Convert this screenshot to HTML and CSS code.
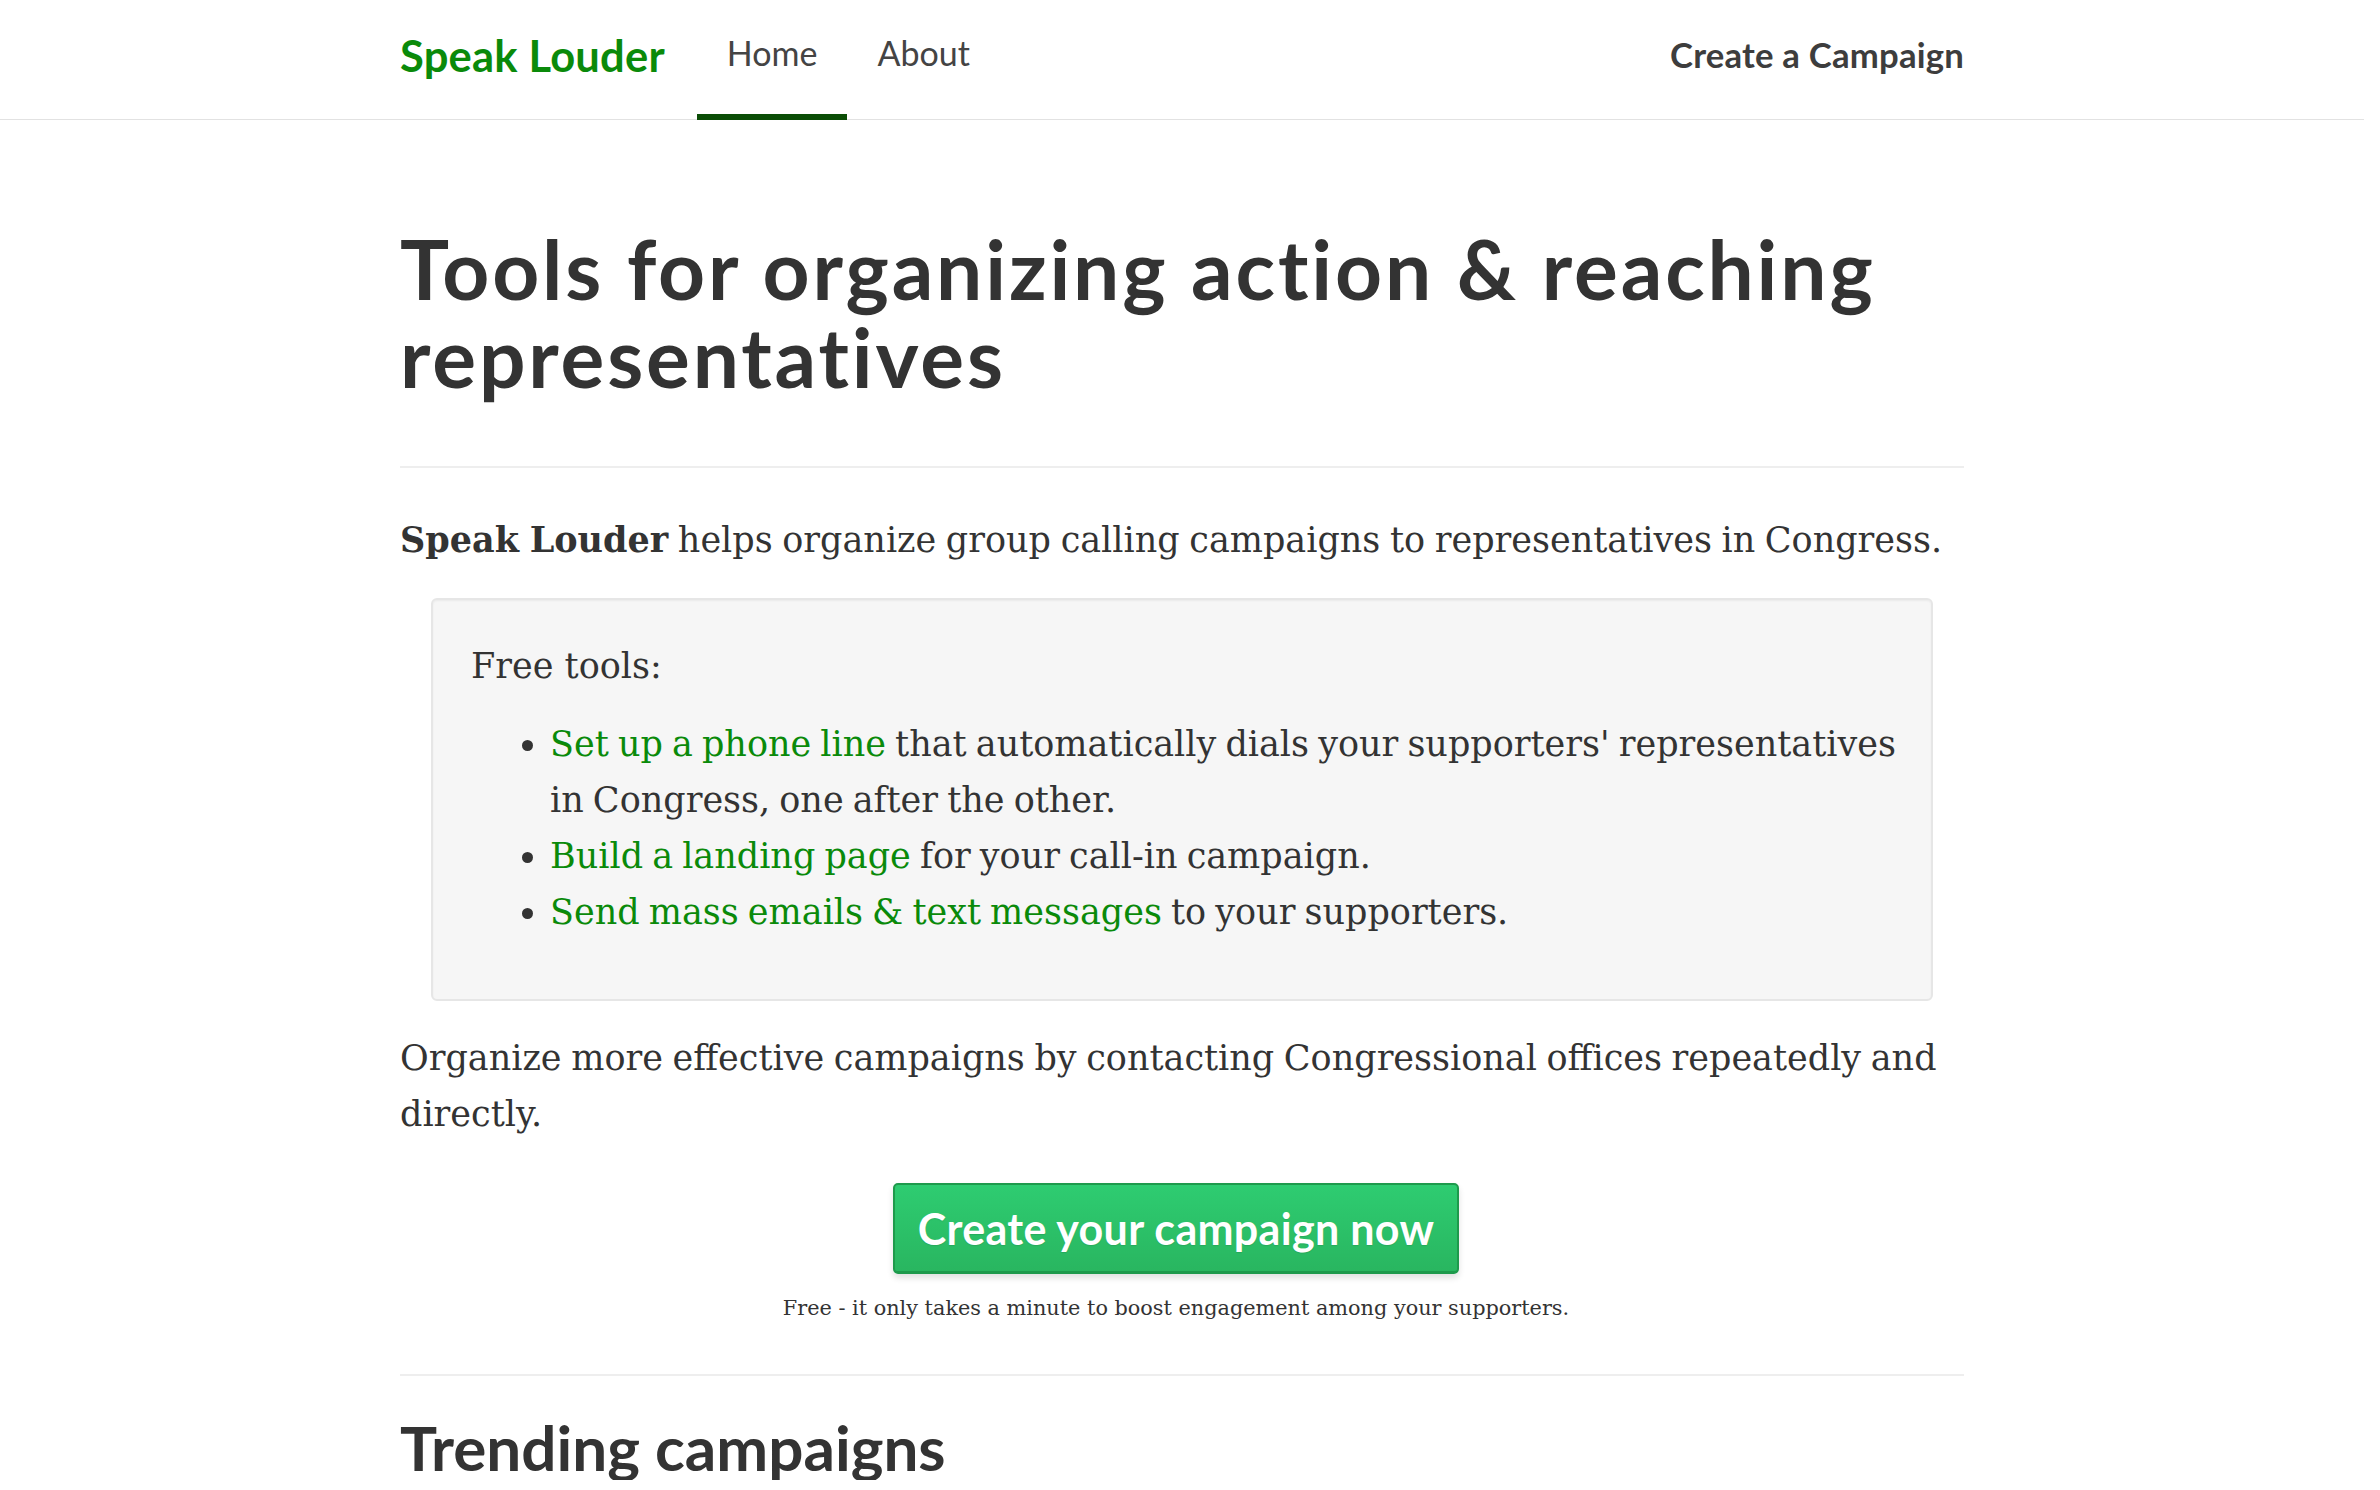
FILE: index.html
```html
<!DOCTYPE html>
<html>
<head>
<meta charset="utf-8">
<title>Speak Louder</title>
<link rel="stylesheet" href="styles.css">
</head>
<body>
<nav class="navbar">
  <div class="container nav-inner">
    <a class="brand" href="#">Speak Louder</a>
    <ul class="nav-links">
      <li class="active"><a href="#">Home</a></li>
      <li><a href="#">About</a></li>
    </ul>
    <a class="nav-cta" href="#">Create a Campaign</a>
  </div>
</nav>
<main class="container">
  <h1 class="title">Tools for organizing action &amp; reaching representatives</h1>
  <hr class="rule">
  <p class="lead"><strong>Speak Louder</strong> helps organize group calling campaigns to representatives in Congress.</p>
  <div class="well">
    <p class="well-title">Free tools:</p>
    <ul class="tools">
      <li><a href="#">Set up a phone line</a> that automatically dials your supporters' representatives in Congress, one after the other.</li>
      <li><a href="#">Build a landing page</a> for your call-in campaign.</li>
      <li><a href="#">Send mass emails &amp; text messages</a> to your supporters.</li>
    </ul>
  </div>
  <p class="lead">Organize more effective campaigns by contacting Congressional offices repeatedly and directly.</p>
  <div class="cta">
    <a class="btn" href="#">Create your campaign now</a>
    <p class="small">Free - it only takes a minute to boost engagement among your supporters.</p>
  </div>
  <hr class="rule rule-2">
  <h2 class="subtitle">Trending campaigns</h2>
</main>
</body>
</html>
```
FILE: styles.css
```css
html, body {
  margin: 0;
  padding: 0;
  background: #fff;
}
body {
  padding-right: 16px;
  font-family: "DejaVu Serif", Georgia, serif;
  color: #333;
  overflow: hidden;
}
a { text-decoration: none; }
.container {
  width: 1564px;
  margin: 0 auto;
}
.navbar {
  height: 119px;
  border-bottom: 1px solid #e2e2e2;
}
.nav-inner {
  display: flex;
  align-items: stretch;
  height: 119px;
}
.brand {
  font-family: "Lato", "Open Sans", sans-serif;
  font-weight: 700;
  font-size: 43.5px;
  color: #0a8a0a;
  display: flex;
  align-items: center;
  padding-bottom: 10px;
  margin-right: 32px;
  letter-spacing: 0.2px;
}
.nav-links {
  display: flex;
  list-style: none;
  margin: 0;
  padding: 0;
  flex: 1;
}
.nav-links li {
  display: flex;
}
.nav-links a {
  font-family: "Lato", "Open Sans", sans-serif;
  font-size: 34px;
  color: #444;
  display: flex;
  align-items: center;
  padding: 0 30px 10px;
  border-bottom: 6px solid transparent;
  margin-bottom: -1px;
}
.nav-links li.active a {
  border-bottom-color: #0b4d06;
}
.nav-cta {
  font-family: "Lato", "Open Sans", sans-serif;
  font-weight: 700;
  font-size: 34.7px;
  color: #3d3d3d;
  display: flex;
  align-items: center;
  padding-bottom: 10px;
  letter-spacing: 0.2px;
}
.title {
  font-family: "Lato", "Open Sans", sans-serif;
  font-weight: 700;
  font-size: 82px;
  line-height: 88px;
  margin: 104px 0 0;
  color: #333;
  letter-spacing: 2.85px;
}
.rule {
  border: 0;
  border-top: 2px solid #eee;
  margin: 66px 0 0;
}
.lead {
  font-size: 35px;
  line-height: 56px;
  margin: 44px 0 0;
  color: #333;
  word-spacing: -1.5px;
}
.lead strong { font-weight: 700; }
.well {
  margin: 30px 31px 0;
  background: #f6f6f6;
  border: 2px solid #e6e6e6;
  border-radius: 6px;
  box-shadow: inset 0 1px 2px rgba(0,0,0,0.05);
  padding: 38px 20px 59px 38px;
}
.well-title {
  font-size: 35px;
  line-height: 56px;
  margin: 0;
}
.tools {
  margin: 22px 0 0;
  padding-left: 79px;
  font-size: 35px;
  line-height: 56px;
  word-spacing: -2px;
}
.tools a { color: #0a8a0a; }
.well + .lead { margin-top: 29px; }
.cta {
  display: flex;
  flex-direction: column;
  align-items: center;
  margin-top: 41px;
  padding-right: 12px;
}
.btn {
  font-family: "Lato", "Open Sans", sans-serif;
  font-weight: 700;
  font-size: 43px;
  color: #fff;
  background: linear-gradient(#2ecc71, #29b660);
  border: 2px solid #1e9a4c;
  border-bottom-width: 3px;
  border-radius: 5px;
  box-shadow: 0 4px 6px rgba(0,0,0,0.12);
  height: 86px;
  padding: 0 23px;
  display: flex;
  align-items: center;
  letter-spacing: 0.3px;
  text-shadow: 0 1px 1px rgba(0,0,0,0.1);
}
.small {
  font-size: 20.8px;
  line-height: 34px;
  margin: 17px 0 0;
}
.rule-2 { margin-top: 49px; }
.subtitle {
  font-family: "Lato", "Open Sans", sans-serif;
  font-weight: 700;
  font-size: 62px;
  line-height: 66px;
  margin: 38px 0 0;
  color: #333;
  letter-spacing: 0px;
}
```
